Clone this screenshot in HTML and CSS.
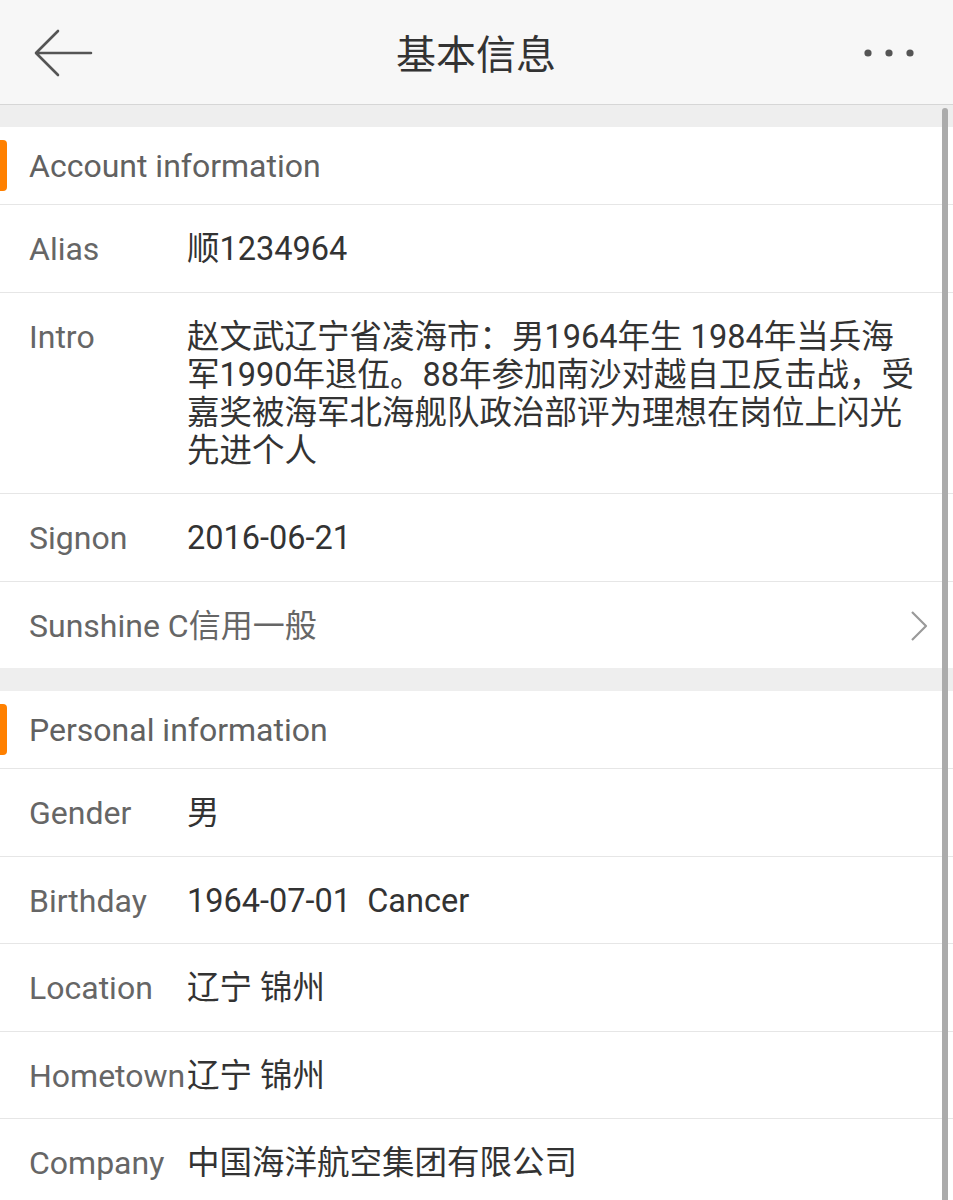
FILE: index.html
```html
<!DOCTYPE html>
<html lang="zh-CN">
<head>
<meta charset="utf-8">
<title>基本信息</title>
<link rel="stylesheet" href="styles.css">
</head>
<body>
<div class="page">
  <header class="topbar">
    <svg class="back" width="60" height="50" viewBox="0 0 60 50" aria-hidden="true">
      <path d="M57 24H3M24 2L2 24L24 46" fill="none" stroke="#555" stroke-width="2.6" stroke-linecap="round" stroke-linejoin="round"/>
    </svg>
    <h1 class="title">基本信息</h1>
    <svg class="more" width="54" height="10" viewBox="0 0 54 10" aria-hidden="true">
      <circle cx="5" cy="5" r="3.6" fill="#555"/>
      <circle cx="26" cy="5" r="3.6" fill="#555"/>
      <circle cx="47" cy="5" r="3.6" fill="#555"/>
    </svg>
  </header>

  <div class="gap"></div>
  <section class="group">
    <div class="group-head"><span class="mark"></span>Account information</div>
    <div class="row"><span class="label">Alias</span><span class="value">顺1234964</span></div>
    <div class="row"><span class="label">Intro</span><span class="value">赵文武辽宁省凌海市：男1964年生 1984年当兵海<br>军1990年退伍。88年参加南沙对越自卫反击战，受<br>嘉奖被海军北海舰队政治部评为理想在岗位上闪光<br>先进个人</span></div>
    <div class="row"><span class="label">Signon</span><span class="value">2016-06-21</span></div>
    <div class="row link"><span class="label">Sunshine C信用一般</span>
      <svg class="chev" width="18" height="30" viewBox="0 0 18 30" aria-hidden="true"><path d="M2 1L16 15L2 29" fill="none" stroke="#9a9a9a" stroke-width="2.2" stroke-linejoin="round"/></svg>
    </div>
  </section>

  <div class="gap gap-b"></div>
  <section class="group">
    <div class="group-head"><span class="mark"></span>Personal information</div>
    <div class="row"><span class="label">Gender</span><span class="value">男</span></div>
    <div class="row"><span class="label">Birthday</span><span class="value pre">1964-07-01  Cancer</span></div>
    <div class="row"><span class="label">Location</span><span class="value">辽宁 锦州</span></div>
    <div class="row"><span class="label">Hometown</span><span class="value">辽宁 锦州</span></div>
    <div class="row"><span class="label">Company</span><span class="value">中国海洋航空集团有限公司</span></div>
  </section>

  <div class="scrollbar"></div>
</div>
</body>
</html>
```

FILE: styles.css
```css
html, body {
  margin: 0;
  padding: 0;
  background: #ffffff;
}
body {
  font-family: Roboto, "Noto Sans CJK SC", "Noto Sans", sans-serif;
  color: #333;
}
.page {
  position: relative;
  width: 953px;
  height: 1200px;
  overflow: hidden;
}
.topbar {
  height: 104px;
  background: #f7f7f7;
  border-bottom: 1px solid #d6d6d6;
  display: flex;
  align-items: center;
  justify-content: space-between;
  padding: 0 36px 0 34px;
}
.back {
  display: block;
  margin-top: 4px;
}
.title {
  margin: 0 5px 0 0;
  font-weight: 400;
  font-size: 40px;
  color: #333;
  font-family: "Noto Sans CJK SC", sans-serif;
}
.more {
  display: block;
  margin-top: 2px;
}
.gap {
  height: 22px;
  background: #eeeeee;
}
.gap-b {
  height: 23px;
}
.group {
  background: #fff;
}
.group-head {
  height: 77px;
  display: flex;
  align-items: center;
  padding-left: 29px;
  font-size: 32px;
  color: #616161;
  border-bottom: 1px solid #e6e6e6;
  position: relative;
}
.mark {
  position: absolute;
  left: 0;
  top: 13px;
  width: 7px;
  height: 51px;
  background: #ff8000;
  border-radius: 0 4px 4px 0;
}
.row {
  display: flex;
  align-items: flex-start;
  padding: 25px 0 23.5px 29px;
  line-height: 38px;
  font-size: 32px;
  border-bottom: 1px solid #e6e6e6;
}
.row:last-child {
  border-bottom: none;
}
.label {
  flex: 0 0 auto;
  min-width: 158px;
  color: #666;
}
.value {
  color: #333;
  font-size: 32.5px;
}
.pre {
  white-space: pre;
}
.link {
  align-items: center;
  justify-content: space-between;
  padding-right: 25px;
}
.chev {
  display: block;
  margin-top: 1px;
}
.scrollbar {
  position: absolute;
  right: 5px;
  top: 108px;
  width: 6px;
  height: 1092px;
  background: #ababab;
  border-radius: 3px 3px 0 0;
}
```
